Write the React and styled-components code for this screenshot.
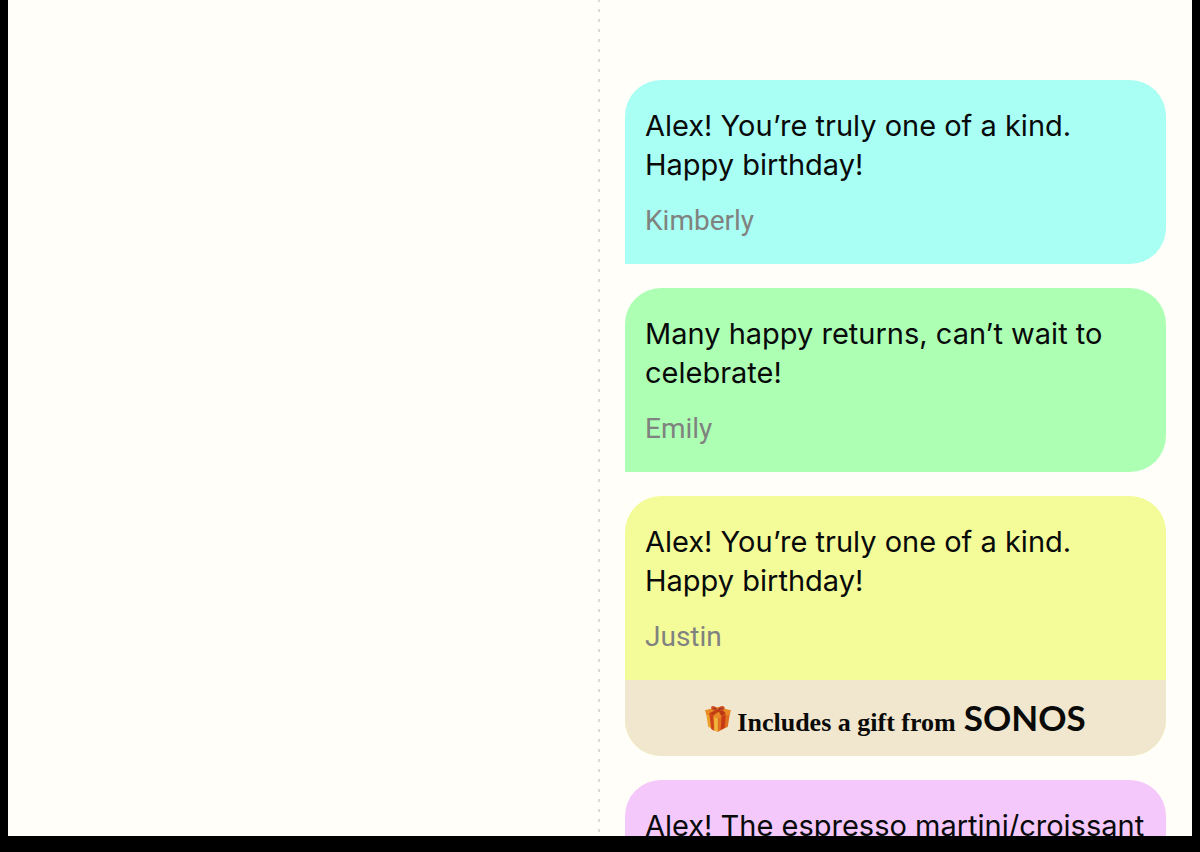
import React from 'react';
import styled, { createGlobalStyle } from 'styled-components';


const GlobalStyle = createGlobalStyle`
  *, *::before, *::after {
    box-sizing: border-box;
  }
  body {
    margin: 0;
    background-color: #000;
  }
`;


const Frame = styled.div`
  height: 100vh;
  padding: 0 8px 16px;
  background-color: #000;
`;


const Card = styled.main`
  display: grid;
  grid-template-columns: 1fr 1fr;
  height: 100%;
  overflow: hidden;
  background-color: #fffef9;
`;


const BlankPage = styled.section`
  background-image: linear-gradient(#dbdbd7 3px, transparent 3px);
  background-position: right -1px;
  background-repeat: repeat-y;
  background-size: 2px 10px;
`;


const MessagePage = styled.section`
  display: flex;
  flex-direction: column;
  gap: 24px;
  padding: 80px 26px 24px 25px;
`;


const Bubble = styled.article`
  flex: none;
  overflow: hidden;
  border-radius: ${props => (props.$gift ? '36px' : '36px 36px 36px 0')};
  background-color: ${props => props.$color};
`;


const BubbleBody = styled.div`
  padding: 26px 12px 24px 20px;
`;


const Text = styled.p`
  margin: 0;
  color: #080a0a;
  font-family: Inter, sans-serif;
  font-size: 29px;
  line-height: 39px;
`;


const Author = styled.p`
  margin: 18px 0 0;
  color: #80827f;
  font-family: Roboto, sans-serif;
  font-size: 28px;
  line-height: 38px;
`;


const GiftBar = styled.footer`
  display: flex;
  align-items: center;
  justify-content: center;
  gap: 6px;
  height: 76px;
  background-color: #f1e7cf;
  color: #0a0a08;
`;


const GiftText = styled.div`
  display: flex;
  align-items: baseline;
  gap: 8px;
`;


const GiftLabel = styled.span`
  font-family: 'Liberation Serif', serif;
  font-size: 26px;
  font-weight: 700;
  line-height: 28px;
`;


const Brand = styled.span`
  font-family: Lato, sans-serif;
  font-size: 35px;
  font-weight: 700;
  line-height: 36px;
`;


function GiftIcon() {
  return (
    <svg width="26" height="28" viewBox="0 -1 25 27" aria-hidden="true">
      <path d="M1 8 L12 11 L12 26 L3 21 Z" fill="#eda12c" />
      <path d="M12 11 L24 8 L22 21 L12 26 Z" fill="#e0701f" />
      <path d="M0 5 L12 2 L25 5 L24 9 L12 13 L1 9 Z" fill="#e98a25" />
      <path d="M4 8 L8 10 L9 25 L6 23 Z" fill="#cf4418" />
      <path d="M9 12 L12 13 L12 26 L9 24 Z" fill="#f0b637" />
      <path d="M16 11 L20 9 L19 22 L15 24 Z" fill="#c73a15" />
      <path d="M4 8 L12 4 L15 5 L8 10 Z" fill="#c23d16" />
      <path d="M12 4 L15 3 L20 8 L16 11 Z" fill="#bb3813" />
      <path d="M12 4 C10 0 5 0 6 3 C7 6 10 6 12 4 C15 6 18 6 19 3 C19 0 14 0 12 4 Z" fill="#cf5026" />
      <path d="M11 4 L8 3 M13 4 L17 3" stroke="#93331a" strokeWidth="1" />
    </svg>
  );
}


const messages = [
  { text: 'Alex! You’re truly one of a kind. Happy birthday!', author: 'Kimberly', color: '#aafff4' },
  { text: 'Many happy returns, can’t wait to celebrate!', author: 'Emily', color: '#adffb4' },
  { text: 'Alex! You’re truly one of a kind. Happy birthday!', author: 'Justin', color: '#f4fb99', brand: 'SONOS' },
  { text: 'Alex! The espresso martini/croissant', color: '#f5c8fb' },
];


function Message(props) {
  const { text, author, color, brand } = props;
  return (
    <Bubble $color={color} $gift={Boolean(brand)}>
      <BubbleBody>
        <Text>{text}</Text>
        {author && <Author>{author}</Author>}
      </BubbleBody>
      {brand && (
        <GiftBar>
          <GiftIcon />
          <GiftText>
            <GiftLabel>Includes a gift from</GiftLabel>
            <Brand>{brand}</Brand>
          </GiftText>
        </GiftBar>
      )}
    </Bubble>
  );
}


export default function App() {
  return (
    <Frame>
      <GlobalStyle />
      <Card>
        <BlankPage />
        <MessagePage>
          {messages.map(message => (
            <Message key={message.color} {...message} />
          ))}
        </MessagePage>
      </Card>
    </Frame>
  );
}
